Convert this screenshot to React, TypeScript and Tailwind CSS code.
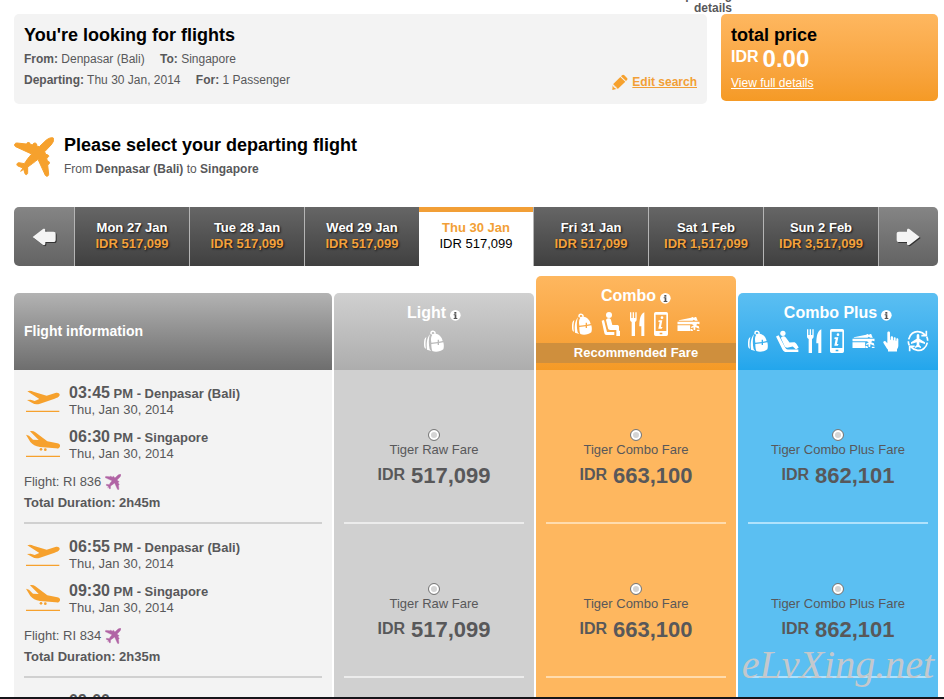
import { useState } from 'react'
import type { ReactNode } from 'react'
import clsx from 'clsx'

interface DayFare {
  day: string
  price: string
}

const DAYS: DayFare[] = [
  { day: 'Mon 27 Jan', price: 'IDR 517,099' },
  { day: 'Tue 28 Jan', price: 'IDR 517,099' },
  { day: 'Wed 29 Jan', price: 'IDR 517,099' },
  { day: 'Thu 30 Jan', price: 'IDR 517,099' },
  { day: 'Fri 31 Jan', price: 'IDR 517,099' },
  { day: 'Sat 1 Feb', price: 'IDR 1,517,099' },
  { day: 'Sun 2 Feb', price: 'IDR 3,517,099' },
]

interface Flight {
  code: string
  depart: string
  arrive: string
  duration: string
}

const FLIGHTS: Flight[] = [
  { code: 'RI 836', depart: '03:45', arrive: '06:30', duration: '2h45m' },
  { code: 'RI 834', depart: '06:55', arrive: '09:30', duration: '2h35m' },
  { code: 'RI 838', depart: '09:00', arrive: '11:35', duration: '2h35m' },
]

const FARES = [
  { name: 'Tiger Raw Fare', price: '517,099', cell: 'bg-[#d0d0d0]', line: 'border-[#ececec]' },
  { name: 'Tiger Combo Fare', price: '663,100', cell: 'bg-[#feb75f]', line: 'border-[#ffdcae]' },
  { name: 'Tiger Combo Plus Fare', price: '862,101', cell: 'bg-[#5bbff2]', line: 'border-[#b0e2fc]' },
]

/* Jet seen from above, nose to the top right */
function Jet({ className }: { className?: string }) {
  return (
    <svg viewBox="0 0 120 120" className={className} fill="currentColor" aria-hidden="true">
      <path
        d="M118 3 C113 0 103 4 96 10 L76 29 L68 27 L68 21 C65 17 60 17 57 21 L56 24 L49 22 L48 19 C45 15 39 16 38 20 L37 21 L9 18 C1 18 -1 26 5 29 L53 51 C44 61 36 72 31 80 L14 77 C7 79 7 85 12 87 L27 93 L20 103 L29 97 L33 110 C35 115 41 113 41 107 L41 90 C50 84 62 75 72 67 L94 115 C97 120 104 118 104 112 L101 84 L104 82 C108 79 107 74 103 73 L100 72 L98 64 L102 61 C106 58 104 54 100 53 L95 52 L92 44 L111 24 C117 16 122 8 118 3 Z"
        stroke="currentColor"
        strokeWidth="3"
      />
    </svg>
  )
}

function TakeOff() {
  return (
    <svg viewBox="0 0 102 69" className="h-[23px] w-[34px]" fill="#f6a12d" aria-hidden="true">
      <path d="M4 4 C10 1 16 2 22 5 L62 17 L88 9 C96 7 102 10 101 16 C99 22 92 24 86 26 L42 41 C33 44 25 43 19 39 L3 30 L14 29 L26 33 L40 27 Z" />
      <path d="M0 62 H100 V66 H0 Z" />
    </svg>
  )
}

function Landing() {
  return (
    <svg viewBox="0 0 102 84" className="h-[28px] w-[34px]" fill="#f6a12d" aria-hidden="true">
      <path d="M12 4 C17 2 23 3 28 7 L64 34 L94 40 C101 41 104 46 101 51 C99 56 94 56 88 55 L42 51 C28 49 20 44 13 36 L0 14 L9 17 L21 29 L38 30 Z" />
      <circle cx="45" cy="58" r="4" />
      <circle cx="58" cy="59" r="4" />
      <path d="M0 77 H102 V81 H0 Z" />
    </svg>
  )
}

function Pencil() {
  return (
    <svg viewBox="0 0 48 48" className="h-4 w-4" fill="#f6a12d" aria-hidden="true">
      <path d="M30 4 C32 2 35 2 37 4 L45 12 C47 14 47 16 45 18 L42 21 L27 7 Z M25 9 L40 23 L18 44 L14 43 L13 38 L8 37 L7 33 L3 31 Z M2 34 L5 40 L13 45 L1 48 Z" />
    </svg>
  )
}

function Arrow({ flip }: { flip?: boolean }) {
  return (
    <svg viewBox="0 0 75 57" className="mt-px h-[19px] w-[25px]" aria-hidden="true">
      <g transform={flip ? 'matrix(-1 0 0 1 73 0)' : undefined}>
        <path d="M2 27 L32 4 C37 1 40 3 40 7 V11 H64 C69 11 71 13 71 18 V35 C71 40 69 42 64 42 H40 V47 C40 51 37 53 32 50 Z" fill="#333" transform={flip ? 'translate(-3 3)' : 'translate(3 3)'} />
        <path d="M2 27 L32 4 C37 1 40 3 40 7 V11 H64 C69 11 71 13 71 18 V35 C71 40 69 42 64 42 H40 V47 C40 51 37 53 32 50 Z" fill="#f4f4f4" />
      </g>
    </svg>
  )
}

function Info() {
  return (
    <svg viewBox="0 0 33 33" className="mt-1 ml-1 h-[11px] w-[11px]" aria-hidden="true">
      <circle cx="16" cy="16" r="16" fill="#fff" />
      <path d="M13 6 h6 v5 h-6 Z M11 13 h8 v11 h3 v3 H11 v-3 h3 v-8 h-3 Z" fill="#555" />
    </svg>
  )
}

function Backpack() {
  return (
    <svg viewBox="0 0 60 66" className="h-[22px] w-5" fill="#fff" aria-hidden="true">
      <path d="M19 12 C18 3 23 1 29 2 C35 3 36 8 35 11 C46 13 54 21 56 33 L45 35 V29 H41 V36 L22 38 C20 26 21 19 25 14 Z M26 6 C23 6 23 9 24 12 L31 11 C31 8 30 6 26 6 Z" fillRule="evenodd" />
      <path d="M18 13 C13 26 14 44 17 58 L22 63 L9 59 C7 42 8 24 18 13 Z" />
      <path d="M7 21 C4 34 4 46 6 56 C1 55 0 50 0 42 C0 32 1 24 7 21 Z" />
      <path d="M22 42 L41 40 V45 H45 V39 L58 37 C60 44 60 52 58 58 C50 65 34 67 25 63 C22 56 22 48 22 42 Z" />
    </svg>
  )
}

function Seat() {
  return (
    <svg viewBox="0 0 60 72" className="h-6 w-5" fill="#fff" aria-hidden="true">
      <circle cx="24" cy="9" r="9" />
      <path d="M15 24 C17 17 29 17 30 24 L34 39 H47 C52 39 54 41 54 45 V56 H57 V72 H46 V54 H28 C23 54 22 52 21 49 Z" />
      <path d="M2 26 L9 24 L18 60 H40 V69 H17 C12 69 11 67 10 63 Z" />
    </svg>
  )
}

function Recliner() {
  return (
    <svg viewBox="0 0 70 68" className="h-[23px] w-[23px]" fill="#fff" aria-hidden="true">
      <circle cx="21" cy="9" r="8" />
      <path d="M15 23 C19 17 26 17 30 22 L41 37 L54 36 C58 36 60 38 62 41 L69 52 L61 58 L51 49 L34 53 C30 53 28 51 26 48 Z" />
      <path d="M0 19 L8 15 L28 52 C30 56 32 58 36 58 H68 V66 H32 C26 66 23 63 20 59 Z" />
    </svg>
  )
}

function Cutlery() {
  return (
    <svg viewBox="0 0 45 72" className="h-6 w-[15px]" fill="#fff" aria-hidden="true">
      <path d="M0 1 H4 V18 H8 V1 H12 V18 H16 V1 H20 V22 C20 27 18 29 15 30 V72 H5 V30 C2 29 0 27 0 22 Z" />
      <path d="M43 1 V72 H34 V43 H28 C28 22 32 5 43 1 Z" />
    </svg>
  )
}

function InfoPhone() {
  return (
    <svg viewBox="0 0 42 72" className="h-6 w-3.5" aria-hidden="true">
      <path d="M5 0 H37 Q42 0 42 5 V67 Q42 72 37 72 H5 Q0 72 0 67 V5 Q0 0 5 0 Z M5 8 V57 H37 V8 Z M17 62 V67 H25 V62 Z" fill="#fff" fillRule="evenodd" />
      <circle cx="24" cy="17" r="4" fill="#fff" />
      <path d="M14 25 H25 L21 45 H26 L23 50 H13 L17 30 H13 Z" fill="#fff" />
    </svg>
  )
}

function GiftCard() {
  return (
    <svg viewBox="0 0 68 48" className="h-4 w-[23px]" fill="#fff" aria-hidden="true">
      <path d="M5 13 L42 5 C45 2 49 3 50 6 C54 1 59 3 59 8 L62 14 H54 L50 11 L46 14 H5 Z" />
      <path d="M1 17 H67 V25 L60 23 L57 28 L65 31 L67 38 L60 36 L55 33 L54 43 L49 41 L49 34 L42 37 V32 L50 28 L44 25 H1 Z" />
      <path d="M1 28 H39 V45 H1 Z M40 39 H45 L48 45 H40 Z M59 41 H67 V45 H59 Z" />
    </svg>
  )
}

function Hand() {
  return (
    <svg viewBox="0 0 48 62" className="h-[21px] w-4" fill="#fff" aria-hidden="true">
      <path d="M13 5 C13 0 21 0 21 5 V26 H23 V18 C23 14 30 14 30 18 V27 H32 V21 C32 17 38 17 38 21 V29 H40 V24 C40 20 46 20 46 25 V44 C46 50 43 53 42 55 V61 H15 V56 C10 50 5 42 1 35 C0 31 5 28 8 31 L13 36 Z" />
    </svg>
  )
}

function FlightChange() {
  return (
    <svg viewBox="0 0 66 66" className="h-[22px] w-[22px]" aria-hidden="true">
      <g fill="none" stroke="#fff" strokeWidth="5">
        <path d="M5 28 C8 12 22 3 34 5 C43 6 49 9 55 16" />
        <path d="M61 38 C58 54 44 63 32 61 C23 60 17 57 11 50" />
        <path d="M58 2 V17 H43" />
        <path d="M8 64 V49 H23" />
        <path d="M4 34 C4 39 5 43 7 46 M62 32 C62 27 61 23 59 20" />
      </g>
      <path d="M33 12 C29 12 29 16 29 20 V26 L12 37 V42 L29 37 V45 L24 50 V54 L33 51 L42 54 V50 L37 45 V37 L54 42 V37 L37 26 V20 C37 16 37 12 33 12 Z" fill="#fff" />
    </svg>
  )
}

function DayTab({ fare, active, onSelect }: { fare: DayFare; active: boolean; onSelect: () => void }) {
  return (
    <button
      onClick={onSelect}
      className={clsx(
        'flex-1 text-[13px] leading-4',
        active
          ? 'border-t-[5px] border-[#f29f36] bg-white pb-[7px] font-normal'
          : 'border-l border-[#b5b5b5] bg-linear-to-b from-[#666] to-[#404040] pb-0.5 font-bold [text-shadow:1px_1px_2px_#111]'
      )}
    >
      <span className={clsx('block font-bold', active ? 'text-[#f29f36]' : 'text-white')}>{fare.day}</span>
      <span className={clsx('block', active ? 'text-black' : 'text-[#f3a13c]')}>{fare.price}</span>
    </button>
  )
}

interface FareHeadProps {
  title: string
  className: string
  children: ReactNode
  recommended?: boolean
}

function FareHead({ title, className, children, recommended }: FareHeadProps) {
  return (
    <th scope="col" className="w-[202px] p-0 pl-0.5 align-bottom font-normal">
      <div className={clsx('rounded-t-[5px] bg-linear-to-b pt-2.5 text-white', className, recommended ? 'h-[94px]' : 'h-[77px]')}>
        <div className="flex items-center justify-center text-base leading-5 font-bold">
          {title}
          <Info />
        </div>
        <div className="mt-1.5 flex h-6 items-center justify-center">{children}</div>
        {recommended && (
          <div className="mt-[7px] h-5 bg-[#cf8f3d] text-center text-[13px] leading-5 font-bold">Recommended Fare</div>
        )}
      </div>
    </th>
  )
}

function Leg({ icon, time, place }: { icon: ReactNode; time: string; place: string }) {
  return (
    <div className="flex h-11 pl-0.5">
      <div className="w-[43px]">{icon}</div>
      <div className="leading-4">
        <div className="h-4 text-[13px] leading-[14px] font-bold">
          <span className="text-base leading-[14px]">{time}</span> PM - {place}
        </div>
        <div className="text-[13px]">Thu, Jan 30, 2014</div>
      </div>
    </div>
  )
}

function FlightInfo({ flight }: { flight: Flight }) {
  return (
    <td className="p-0">
      <div className="h-[154px] bg-[#f3f3f3] px-2.5">
        <div className="h-full border-b-2 border-[#d0d0d0] pt-4">
          <Leg icon={<div className="pt-1"><TakeOff /></div>} time={flight.depart} place="Denpasar (Bali)" />
          <Leg icon={<Landing />} time={flight.arrive} place="Singapore" />
          <div className="flex h-4 items-center text-[13px]">
            Flight: {flight.code}
            <Jet className="ml-1 h-4 w-4 text-[#b164a5]" />
          </div>
          <div className="mt-[3px] text-[13px] leading-5 font-bold">Total Duration: {flight.duration}</div>
        </div>
      </div>
    </td>
  )
}

export default function App() {
  const [day, setDay] = useState(3)

  return (
    <div className="relative h-screen overflow-hidden bg-white pr-1.5 pl-3.5 font-['Liberation_Sans',Arial,sans-serif] text-xs text-[#58585a]">
      <div className="flex h-3.5 items-end justify-end pr-[206px] text-right leading-[14px] font-bold">
        <p className="-mb-px leading-[13px]">
          Spending
          <br />
          details
        </p>
      </div>

      <header className="flex items-start gap-3.5">
        <section className="flex h-[90px] flex-1 justify-between rounded-[5px] bg-[#f3f3f3] px-2.5 pt-2.5">
          <div>
            <h1 className="text-lg leading-[22px] font-bold text-black">You're looking for flights</h1>
            <p className="mt-[5px] leading-[17px]">
              <b>From:</b> Denpasar (Bali) <b className="ml-3">To:</b> Singapore
            </p>
            <p className="mt-1 leading-[17px]">
              <b>Departing:</b> Thu 30 Jan, 2014 <b className="ml-3">For:</b> 1 Passenger
            </p>
          </div>
          <a href="#search" className="mb-3.5 flex items-center gap-1 self-end font-bold text-[#f29f36]">
            <Pencil />
            <span className="underline">Edit search</span>
          </a>
        </section>

        <section className="h-[87px] w-[217px] rounded-[5px] bg-linear-to-b from-[#feb75f] to-[#f59a25] px-2.5 pt-2.5 text-white">
          <h2 className="text-lg leading-[22px] font-bold text-black">total price</h2>
          <p className="flex h-6 items-start gap-1 font-bold">
            <span className="text-base leading-[22px]">IDR</span>
            <span className="text-2xl leading-[26px]">0.00</span>
          </p>
          <a href="#details" className="mt-[5px] block leading-4 underline">View full details</a>
        </section>
      </header>

      <section className="mt-[30px] flex h-[73px] gap-2.5">
        <Jet className="mt-[3px] h-10 w-10 text-[#f6a12d]" />
        <div>
          <h2 className="text-lg leading-[22px] font-bold text-black">Please select your departing flight</h2>
          <p className="mt-[5px] leading-4">
            From <b>Denpasar (Bali)</b> to <b>Singapore</b>
          </p>
        </div>
      </section>

      <nav className="flex h-[59px] overflow-hidden rounded-[5px]">
        <button aria-label="Previous days" className="flex w-[60px] items-center justify-center bg-linear-to-b from-[#858585] to-[#636363]">
          <Arrow />
        </button>
        {DAYS.map((fare, i) => (
          <DayTab key={fare.day} fare={fare} active={i === day} onSelect={() => setDay(i)} />
        ))}
        <button aria-label="Next days" className="flex w-[60px] items-center justify-center border-l border-[#b5b5b5] bg-linear-to-b from-[#858585] to-[#636363]">
          <Arrow flip />
        </button>
      </nav>

      <table className="mt-2.5 w-full table-fixed border-collapse">
        <thead>
          <tr>
            <th scope="col" className="p-0 text-left align-bottom">
              <div className="h-[77px] rounded-t-[5px] bg-linear-to-b from-[#b3b3b3] to-[#6e6e6e] px-2.5 text-sm leading-[77px] text-white">
                Flight information
              </div>
            </th>
            <FareHead title="Light" className="from-[#d0d0d0] to-[#adadad]">
              <Backpack />
            </FareHead>
            <FareHead title="Combo" className="from-[#feb75f] to-[#f59a25]" recommended>
              <div className="flex items-center gap-[9px]">
                <Backpack />
                <Seat />
                <Cutlery />
                <InfoPhone />
                <GiftCard />
              </div>
            </FareHead>
            <FareHead title="Combo Plus" className="from-[#5bbff2] to-[#22a6ec]">
              <div className="flex items-center gap-2">
                <Backpack />
                <Recliner />
                <Cutlery />
                <InfoPhone />
                <GiftCard />
                <Hand />
                <FlightChange />
              </div>
            </FareHead>
          </tr>
        </thead>
        <tbody>
          {FLIGHTS.map(flight => (
            <tr key={flight.code}>
              <FlightInfo flight={flight} />
              {FARES.map(fare => (
                <td key={fare.name} className="p-0 pl-0.5">
                  <div className={clsx('h-[154px] px-2.5', fare.cell)}>
                    <label className={clsx('flex h-full flex-col items-center border-b-2 pt-[59px]', fare.line)}>
                      <input
                        type="radio"
                        name="fare"
                        className="h-3 w-3 appearance-none rounded-full border border-[#777] bg-[#d4d4d4] shadow-[inset_0_0_0_2px_#fff] checked:bg-[#444]"
                      />
                      <span className="mt-px text-[13px] leading-4">{fare.name}</span>
                      <span className="mt-1 flex items-start gap-1.5 font-bold">
                        <span className="text-base leading-[26px]">IDR</span>
                        <span className="text-[22px] leading-7">{fare.price}</span>
                      </span>
                    </label>
                  </div>
                </td>
              ))}
            </tr>
          ))}
        </tbody>
      </table>

      <span className="absolute right-2.5 bottom-3.5 font-['Liberation_Serif',serif] text-[40px] leading-10 text-[#c4c8cc] italic">
        eLvXing.net
      </span>
      <div className="absolute inset-x-0 bottom-0 h-0.5 bg-[#15151a]" />
    </div>
  )
}
